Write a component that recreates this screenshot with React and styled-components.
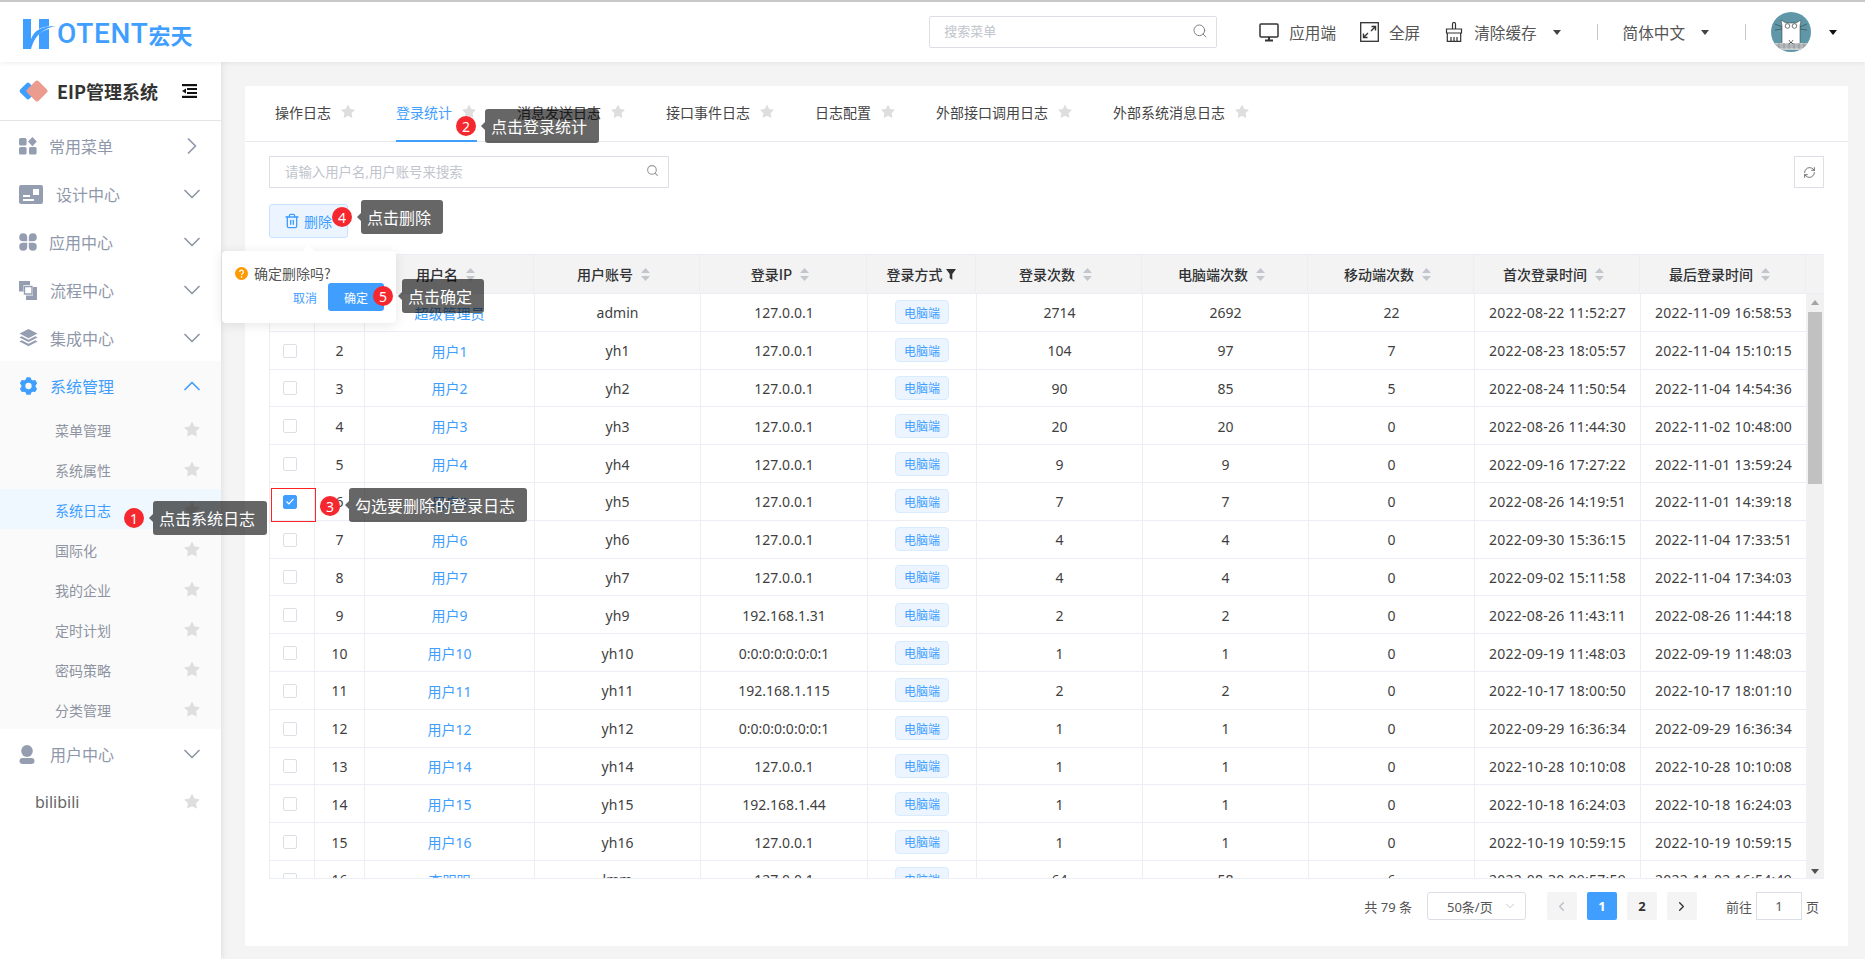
import React from "react";
import styled, { createGlobalStyle } from "styled-components";
import { ChevronDown, ChevronRight, ChevronUp, ChevronLeft, Search, RefreshCw, Trash2 } from "lucide-react";
import { AiFillStar } from "react-icons/ai";

const BLUE = "#409eff";
const MENU = "#8f98aa";
const LINE = "#ebeef5";
const COLS = "45px 50px 170px 166px 167px 109px 166px 166px 166px 166px 166px";

const Global = createGlobalStyle`
  html, body { margin: 0; padding: 0; height: 100%; overflow: hidden; }
  body { font-family: "Noto Sans", "Noto Sans CJK SC", sans-serif; font-size: 14px; color: #333; background: #f4f4f4; }
  * { box-sizing: border-box; }
`;

const Page = styled.div`
  position: relative; width: 100%; height: 959px; display: flex; flex-direction: column; overflow: hidden; background: #f4f4f4;
`;

/* ---------- top bar ---------- */
const TopBar = styled.header`
  height: 62px; flex: none; display: flex; align-items: center; padding: 0 28px 0 23px; background: #fff;
  border-top: 2px solid #c9c9c9; box-shadow: 0 1px 5px rgba(0,0,0,.08); position: relative; z-index: 3;
`;
const Logo = styled.div`display: flex; align-items: flex-end; height: 32px; color: ${BLUE}; margin-top: 1px;`;
const LogoLatin = styled.span`font-family: Roboto, sans-serif; font-weight: 500; font-size: 28px; line-height: 30px; letter-spacing: .7px; margin-left: 1px;`;
const LogoCjk = styled.span`font-family: "Noto Sans CJK SC", sans-serif; font-weight: 700; font-size: 22px; line-height: 30px;`;
const MenuSearch = styled.div`
  margin-left: auto; margin-right: 42px; width: 288px; height: 32px; border: 1px solid #dcdfe6; border-radius: 2px;
  display: flex; align-items: center; justify-content: space-between; padding: 0 8px 3px 14px; font-size: 13px; color: #c0c4cc;
  svg { color: #777; }
`;
const Action = styled.div`
  display: flex; align-items: center; gap: 10px; font-size: 15.6px; color: #555; font-family: "Noto Sans CJK SC", sans-serif;
  & + & { margin-left: 24px; }
  svg { flex: none; color: #333; }
`;
const Caret = styled.i`
  display: block; width: 0; height: 0; margin-left: 6px; border-style: solid; border-width: 5px 4px 0; border-color: ${p => p.$dark ? "#111" : "#444"} transparent transparent;
`;
const VSep = styled.i`display: block; width: 1px; height: 16px; background: #c8c8c8; margin: 0 25px 0 36px;`;
const AvatarWrap = styled.div`display: flex; align-items: center; gap: 18px; i { margin-left: 0; }`;

/* ---------- body ---------- */
const Shell = styled.div`flex: 1; min-height: 0; display: flex;`;
const Sidebar = styled.aside`
  width: 221px; flex: none; background: #fff; box-shadow: 2px 0 6px rgba(0,0,0,.07); position: relative; z-index: 2;
`;
const Brand = styled.div`
  height: 59px; border-bottom: 1px solid #e4e4e4; display: flex; align-items: center; padding: 0 24px 0 18px;
  font-family: "Noto Sans CJK SC", sans-serif; font-weight: 600; font-size: 18px; color: #333; gap: 9px;
  svg:last-child { margin-left: auto; }
`;
const NavItem = styled.div`
  height: 48px; display: flex; align-items: center; padding: 2px 15px 0 19px; gap: 11px; font-size: 16px;
  font-family: "Noto Sans CJK SC", sans-serif; color: ${p => p.$active ? BLUE : MENU};
  background: ${p => p.$active ? "#fafafa" : "transparent"};
  & > svg:last-child { margin-left: auto; }
`;
const IconSlot = styled.span`display: flex; align-items: center; width: ${p => p.$w || 20}px; flex: none; color: ${p => p.$active ? BLUE : "#959eb1"};`;
const SubList = styled.div`background: #fafafa;`;
const SubItem = styled.div`
  height: 40px; display: flex; align-items: center; justify-content: space-between; padding: 2px 20px 0 55px; font-size: 14px;
  font-family: "Noto Sans CJK SC", sans-serif;
  color: ${p => p.$active ? BLUE : "#8d93a0"}; background: ${p => p.$active ? "#eff7ff" : "transparent"};
`;
const LeafItem = styled(NavItem)`padding: 2px 20px 0 35px; color: #666; font-family: "Noto Sans", sans-serif;`;

const Main = styled.main`flex: 1; min-width: 0; padding: 24px 17px 13px 24px;`;
const Card = styled.section`height: 100%; background: #fff; display: flex; flex-direction: column;`;

const Tabs = styled.nav`height: 56px; flex: none; display: flex; padding-left: 10px; border-bottom: 1px solid #e7e9ee;`;
const Tab = styled.div`
  position: relative; height: 55px; padding: 0 20px 3px; display: flex; align-items: center; gap: 9px; font-size: 14px; white-space: nowrap;
  font-family: "Noto Sans CJK SC", sans-serif;
  color: ${p => p.$active ? BLUE : "#444"};
  &::after { content: ""; display: ${p => p.$active ? "block" : "none"}; position: absolute; left: 20px; right: 20px; bottom: -1px; height: 2px; background: ${BLUE}; }
`;
const Star = styled(AiFillStar)`color: #dedede; flex: none;`;

const Content = styled.div`flex: 1; min-height: 0; display: flex; flex-direction: column; padding: 14px 24px 0;`;
const SearchRow = styled.div`display: flex; justify-content: space-between; height: 32px; flex: none;`;
const SearchBox = styled.div`
  width: 400px; border: 1px solid #dcdfe6; display: flex; align-items: center; justify-content: space-between;
  padding: 0 9px 3px 15px; font-size: 13.4px; color: #c0c4cc; svg { color: #999; }
`;
const IconBtn = styled.button`
  width: 30px; padding: 0; background: #fff; border: 1px solid #dcdfe6; display: flex; align-items: center; justify-content: center; color: #555;
`;
const DeleteBtn = styled.button`
  margin-top: 16px; width: 79px; height: 34px; flex: none; display: flex; align-items: center; gap: 4px; padding: 0 0 0 14px; background: #ecf5ff; border: 1px solid #c6e2ff; border-radius: 3px;
  color: ${BLUE}; font: 14px "Noto Sans CJK SC", sans-serif;
`;

const Table = styled.div`margin-top: 16px; height: 625px; flex: none; display: flex; flex-direction: column; border-left: 1px solid ${LINE}; border-top: 1px solid ${LINE}; border-bottom: 1px solid ${LINE}; overflow: hidden;`;
const Head = styled.div`
  height: 39px; flex: none; display: grid; grid-template-columns: ${COLS} 1fr; background: #f3f3f4; border-bottom: 1px solid ${LINE};
  margin-left: -1px;
`;
const HeadCell = styled.div`
  display: flex; align-items: center; justify-content: center; gap: ${p => p.$filter ? 3 : 8}px; padding-right: ${p => p.$filter ? 0 : 6}px; border-right: 1px solid ${LINE};
  font: 500 14px "Noto Sans CJK SC", sans-serif; color: #303133;
  &:last-child { border-right: 0; }
`;
const TableBody = styled.div`flex: 1; min-height: 0; display: flex; margin-left: -1px;`;
const Rows = styled.div`flex: 1; min-width: 0; overflow: hidden;`;
const Row = styled.div`
  height: 37.8px; display: grid; grid-template-columns: ${COLS}; border-bottom: 1px solid ${LINE}; border-left: 1px solid ${LINE};
`;
const Cell = styled.div`
  display: flex; align-items: center; justify-content: center; border-right: 1px solid ${LINE}; font-size: 14px; color: #3f3f3f; white-space: nowrap;
  letter-spacing: ${p => p.$time ? ".25px" : "0"}; padding-top: ${p => p.$plain ? 0 : 1}px;
  font-family: "Noto Sans", "Noto Sans CJK SC", sans-serif;
  &:first-child { margin-left: -1px; }
`;
const UserLink = styled.span`color: ${BLUE}; font-family: "Noto Sans", "Noto Sans CJK SC", sans-serif; line-height: 1; padding-top: 3px;`;
const Tag = styled.span`
  width: 54px; height: 24px; display: flex; align-items: center; justify-content: center; background: #ecf5ff; border: 1px solid #d9ecff; border-radius: 4px;
  color: ${BLUE}; font: 12px "Noto Sans CJK SC", sans-serif;
`;
const Check = styled.span`
  width: 14px; height: 14px; margin: 1px 0 0 -4px; border-radius: 2px; display: flex; align-items: center; justify-content: center;
  border: 1px solid ${p => p.$on ? BLUE : "#dcdfe6"}; background: ${p => p.$on ? BLUE : "#fff"};
`;
const ScrollBar = styled.div`width: 18px; flex: none; background: #f1f1f1; display: flex; flex-direction: column; align-items: center; position: relative;`;
const ArrowUp = styled.i`display: block; margin-top: 6px; width: 0; height: 0; border-style: solid; border-width: 0 4px 5px; border-color: transparent transparent #a3a3a3;`;
const ArrowDown = styled.i`position: absolute; bottom: 4px; width: 0; height: 0; border-style: solid; border-width: 5px 4px 0; border-color: #505050 transparent transparent;`;
const Thumb = styled.div`width: 14px; height: 172px; margin-top: 7px; background: #c1c1c1;`;

const Pager = styled.div`
  margin-top: 13px; height: 28px; flex: none; display: flex; align-items: center; justify-content: flex-end; padding-right: 5px;
  font: 13px "Noto Sans", "Noto Sans CJK SC", sans-serif; color: #555;
`;
const PageSize = styled.div`
  width: 99px; height: 28px; margin: 0 21px 0 15px; border: 1px solid #dcdfe6; border-radius: 3px; display: flex; align-items: center; justify-content: space-between;
  padding: 0 8px 0 19px; color: #555; svg { color: #c0c4cc; }
`;
const PageBtn = styled.div`
  width: 30px; height: 28px; margin-right: 10px; border-radius: 2px; display: flex; align-items: center; justify-content: center; font-weight: 700;
  background: ${p => p.$on ? BLUE : "#f4f4f5"}; color: ${p => p.$on ? "#fff" : p.$muted ? "#b9bcc4" : "#303133"};
`;
const Jump = styled.span`margin-left: 19px;`;
const JumpInput = styled.div`width: 46px; height: 28px; margin: 0 4px; border: 1px solid #dcdfe6; display: flex; align-items: center; justify-content: center; color: #555;`;

/* ---------- overlays ---------- */
const Popover = styled.div`
  position: absolute; left: 222px; top: 251px; width: 174px; height: 72px; background: #fff; border-radius: 4px;
  box-shadow: 0 2px 12px rgba(0,0,0,.1); z-index: 5; padding: 13px 12px 0 13px;
  &::before { content: ""; position: absolute; left: 82px; top: -4px; width: 9px; height: 9px; background: #fff; transform: rotate(45deg); }
`;
const PopText = styled.div`display: flex; align-items: center; gap: 6px; font: 14px "Noto Sans CJK SC", sans-serif; color: #555; height: 18px;`;
const PopActions = styled.div`display: flex; align-items: center; justify-content: flex-end; margin-top: 1px; padding-right: 0;`;
const PopCancel = styled.span`font: 12px "Noto Sans CJK SC", sans-serif; color: ${BLUE}; margin-right: 11px;`;
const PopOk = styled.span`
  width: 56px; height: 28px; background: ${BLUE}; border-radius: 3px; color: #fff; font: 12px "Noto Sans CJK SC", sans-serif;
  display: flex; align-items: center; padding-left: 16px;
`;
const Badge = styled.span`
  position: absolute; left: ${p => p.$x}px; top: ${p => p.$y}px; width: 20px; height: 20px; border-radius: 50%; background: #f5282f; color: #fff; z-index: 7;
  display: flex; align-items: center; justify-content: center; font: 14px "Noto Sans", sans-serif;
`;
const Tip = styled.div`
  position: absolute; left: ${p => p.$x}px; top: ${p => p.$y}px; height: 34px; padding: 0 12px 0 6px; background: rgba(0,0,0,.6); border-radius: 3px; color: #fff; z-index: 7;
  display: flex; align-items: center; font: 16px "Noto Sans CJK SC", sans-serif; white-space: nowrap;
  &::before { content: ""; position: absolute; left: -4px; top: 13px; border-style: solid; border-width: 4px 4px 4px 0; border-color: transparent rgba(0,0,0,.6) transparent transparent; }
`;
const RedFrame = styled.div`position: absolute; left: 271px; top: 488px; width: 45px; height: 34px; border: 1px solid #f22; z-index: 6;`;

/* ---------- drawings ---------- */
const HMark = () => (
  <svg width="33" height="30" viewBox="0 0 33 30" fill="#409eff">
    <path d="M0 0H8V20C11 12 18 7 33 7C24 8.5 16 13 11 22C9.5 25 8.5 28 8 30H0Z" />
    <path d="M16 0H26V7.2C22 7.6 19 8.6 16 10Z" />
    <path d="M26 10V30H16V15C19 12.5 22 11 26 10Z" />
  </svg>
);
const BrandMark = () => (
  <svg width="30" height="24" viewBox="0 0 30 24">
    <rect x="3.5" y="5.5" width="13" height="13" rx="2" transform="rotate(45 10 12)" fill="#409eff" />
    <rect x="11" y="4" width="16" height="16" rx="2" transform="rotate(45 19 12)" fill="#ec9b8f" />
  </svg>
);
const Outdent = () => (
  <svg width="15" height="14" viewBox="0 0 15 14" fill="#111">
    <rect x="0" y="0" width="15" height="2.2" /><rect x="5" y="4" width="10" height="2" /><rect x="5" y="8" width="10" height="2" /><rect x="0" y="11.8" width="15" height="2.2" />
    <path d="M0 7l4-2.6v5.2z" />
  </svg>
);
const IcoQuick = () => (
  <svg width="18" height="18" viewBox="0 0 18 18" fill="currentColor">
    <rect x="0" y="1" width="7.6" height="7.6" rx="1.6" /><path d="M13.4 0l4.4 4.6-4.4 4.6L9 4.6z" /><rect x="0" y="10" width="7.6" height="7.6" rx="1.6" /><rect x="10" y="10" width="7.6" height="7.6" rx="1.6" />
  </svg>
);
const IcoDesign = () => (
  <svg width="24" height="19" viewBox="0 0 24 19" fill="currentColor">
    <path d="M2 0h20a2 2 0 0 1 2 2v15a2 2 0 0 1-2 2H2a2 2 0 0 1-2-2V2a2 2 0 0 1 2-2zm12 4v6h6V4zM4 10v2h7v-2zm0 4v2h11v-2z" fillRule="evenodd" />
  </svg>
);
const IcoApps = () => (
  <svg width="18" height="18" viewBox="0 0 18 18" fill="currentColor">
    <path d="M8.2 8.2H4A4 4 0 1 1 8.2 4zM9.8 8.2H14A4 4 0 1 0 9.8 4zM8.2 9.8H4A4 4 0 1 0 8.2 14zM9.8 9.8H14A4 4 0 1 1 9.8 14z" />
  </svg>
);
const IcoFlow = () => (
  <svg width="18" height="19" viewBox="0 0 18 19" fill="currentColor">
    <path d="M0 0h11v4H4.5v6.5H0z" /><path d="M7 14.5h7V6h4v13H7z" />
    <path d="M5.5 5.5h7.5v7.5H5.5z" fill="none" stroke="currentColor" strokeWidth="1.4" />
  </svg>
);
const IcoLayers = () => (
  <svg width="19" height="19" viewBox="0 0 19 19" fill="currentColor">
    <path d="M9.5 0l9 4.6-9 4.6-9-4.6z" /><path d="M2.6 7.3l6.9 3.5 6.9-3.5 2.1 1.2-9 4.6-9-4.6z" /><path d="M2.6 11.2l6.9 3.5 6.9-3.5 2.1 1.2-9 4.9-9-4.9z" />
  </svg>
);
const IcoGear = () => (
  <svg width="19" height="20" viewBox="0 0 24 24" fill="currentColor">
    <path fillRule="evenodd" d="M10.3 1h3.4c.6 0 1 .3 1.2.8l.6 2 2 1.1 2-.5c.6-.1 1.1.1 1.4.6l1.7 3c.3.5.2 1-.2 1.4L21 11v2.2l1.4 1.5c.4.4.5 1 .2 1.4l-1.7 3c-.3.5-.8.7-1.4.6l-2-.5-2 1.1-.6 2c-.2.5-.6.8-1.2.8h-3.4c-.6 0-1-.3-1.2-.8l-.6-2-2-1.1-2 .5c-.6.1-1.1-.1-1.4-.6l-1.7-3c-.3-.5-.2-1 .2-1.4L3 13.2V11L1.6 9.4c-.4-.4-.5-1-.2-1.4l1.7-3c.3-.5.8-.7 1.4-.6l2 .5 2-1.1.6-2c.2-.5.6-.8 1.2-.8zM12 8a4 4 0 1 0 0 8 4 4 0 0 0 0-8z" />
  </svg>
);
const IcoUser = () => (
  <svg width="16" height="19" viewBox="0 0 16 19" fill="currentColor">
    <ellipse cx="8" cy="6" rx="5.8" ry="6" /><rect x="0.5" y="13" width="15" height="6" rx="3" />
  </svg>
);
const IcoMonitor = () => (
  <svg width="20" height="19" viewBox="0 0 20 19" fill="none" stroke="#333" strokeWidth="1.5">
    <rect x="1" y="1" width="18" height="13" rx="1" /><path d="M10 14v3M6 17.5h8" strokeWidth="2" />
  </svg>
);
const IcoFull = () => (
  <svg width="19" height="20" viewBox="0 0 19 20" fill="none" stroke="#333" strokeWidth="1.3">
    <rect x=".7" y=".7" width="17.6" height="18.6" /><path d="M11 9L15 5M11.5 4.5h4v4M8 11L4 15M3.5 11.5v4h4" strokeWidth="1.4" />
  </svg>
);
const IcoBroom = () => (
  <svg width="20" height="20" viewBox="0 0 20 20" fill="none" stroke="#333" strokeWidth="1.2">
    <path d="M8.5 7V2a1.5 1.5 0 0 1 3 0v5M2.5 7h15v4h-15zM3.3 11v8.3h13.4V11M7 19v-4M10 19v-4M13 19v-4" />
  </svg>
);
const Cat = () => (
  <svg width="40" height="40" viewBox="0 0 40 40">
    <defs><clipPath id="av"><circle cx="20" cy="20" r="20" /></clipPath></defs>
    <g clipPath="url(#av)">
      <rect width="40" height="40" fill="#5f97a9" />
      <path d="M11 33V14l-1-6 5 3h10l5-3-1 6v19z" fill="#fff" stroke="#333" strokeWidth=".5" />
      <circle cx="16.5" cy="14" r="2.3" fill="none" stroke="#555" strokeWidth=".8" /><circle cx="23.5" cy="14" r="2.3" fill="none" stroke="#555" strokeWidth=".8" />
      <path d="M4 12l7 3M4 18l7-1M36 12l-7 3M36 18l-7-1" stroke="#333" strokeWidth=".5" />
      <rect x="3" y="31" width="34" height="7" fill="#c8cdd0" />
      <path d="M3 33h34M3 35h34M8 31v6M13 31v6M18 31v6M23 31v6M28 31v6M33 31v6" stroke="#777" strokeWidth=".5" />
      <path d="M18 28l2 3 2-3M18 32l2-2 2 2" stroke="#333" strokeWidth=".7" fill="none" />
    </g>
  </svg>
);
const Sort = () => (
  <svg width="9" height="13" viewBox="0 0 9 13" fill="#c3c6cc"><path d="M4.5 0L9 5H0zM0 8h9l-4.5 5z" /></svg>
);
const Funnel = () => (
  <svg width="10" height="11" viewBox="0 0 10 11" fill="#303133"><path d="M0 0h10L6.3 5v6L3.7 9V5z" /></svg>
);
const Help = () => (
  <svg width="13" height="13" viewBox="0 0 13 13"><circle cx="6.5" cy="6.5" r="6.5" fill="#f90" />
    <path d="M4.6 5a1.9 1.9 0 1 1 2.8 1.7c-.6.3-.9.6-.9 1.3" fill="none" stroke="#fff" strokeWidth="1.2" /><circle cx="6.5" cy="9.9" r=".8" fill="#fff" /></svg>
);
const Tick = () => (
  <svg width="10" height="9" viewBox="0 0 10 9" fill="none" stroke="#fff" strokeWidth="1.2"><path d="M1.5 4.5l2.4 2.4L8.5 1.8" /></svg>
);

/* ---------- data ---------- */
const LOCAL = "127.0.0.1";
const V6 = "0:0:0:0:0:0:0:1";
const rows = [
  ["超级管理员", "admin", LOCAL, 2714, 2692, 22, "2022-08-22 11:52:27", "2022-11-09 16:58:53"],
  ["用户1", "yh1", LOCAL, 104, 97, 7, "2022-08-23 18:05:57", "2022-11-04 15:10:15"],
  ["用户2", "yh2", LOCAL, 90, 85, 5, "2022-08-24 11:50:54", "2022-11-04 14:54:36"],
  ["用户3", "yh3", LOCAL, 20, 20, 0, "2022-08-26 11:44:30", "2022-11-02 10:48:00"],
  ["用户4", "yh4", LOCAL, 9, 9, 0, "2022-09-16 17:27:22", "2022-11-01 13:59:24"],
  ["用户5", "yh5", LOCAL, 7, 7, 0, "2022-08-26 14:19:51", "2022-11-01 14:39:18"],
  ["用户6", "yh6", LOCAL, 4, 4, 0, "2022-09-30 15:36:15", "2022-11-04 17:33:51"],
  ["用户7", "yh7", LOCAL, 4, 4, 0, "2022-09-02 15:11:58", "2022-11-04 17:34:03"],
  ["用户9", "yh9", "192.168.1.31", 2, 2, 0, "2022-08-26 11:43:11", "2022-08-26 11:44:18"],
  ["用户10", "yh10", V6, 1, 1, 0, "2022-09-19 11:48:03", "2022-09-19 11:48:03"],
  ["用户11", "yh11", "192.168.1.115", 2, 2, 0, "2022-10-17 18:00:50", "2022-10-17 18:01:10"],
  ["用户12", "yh12", V6, 1, 1, 0, "2022-09-29 16:36:34", "2022-09-29 16:36:34"],
  ["用户14", "yh14", LOCAL, 1, 1, 0, "2022-10-28 10:10:08", "2022-10-28 10:10:08"],
  ["用户15", "yh15", "192.168.1.44", 1, 1, 0, "2022-10-18 16:24:03", "2022-10-18 16:24:03"],
  ["用户16", "yh16", LOCAL, 1, 1, 0, "2022-10-19 10:59:15", "2022-10-19 10:59:15"],
  ["李明明", "lmm", LOCAL, 64, 58, 6, "2022-08-30 09:57:59", "2022-11-02 16:54:49"],
];
const nav = [
  ["常用菜单", <IcoQuick />, 19, <ChevronRight size={28} strokeWidth={1.5} />],
  ["设计中心", <IcoDesign />, 26],
  ["应用中心", <IcoApps />, 19],
  ["流程中心", <IcoFlow />, 20],
  ["集成中心", <IcoLayers />, 20],
];
const subs = ["菜单管理", "系统属性", "系统日志", "国际化", "我的企业", "定时计划", "密码策略", "分类管理"];
const tabs = ["操作日志", "登录统计", "消息发送日志", "接口事件日志", "日志配置", "外部接口调用日志", "外部系统消息日志"];
const heads = ["用户名", "用户账号", "登录IP", "登录方式", "登录次数", "电脑端次数", "移动端次数", "首次登录时间", "最后登录时间"];
const notes = [
  { n: 1, text: "点击系统日志", bx: 124, by: 508, tx: 153, ty: 501 },
  { n: 2, text: "点击登录统计", bx: 456, by: 116, tx: 485, ty: 109 },
  { n: 3, text: "勾选要删除的登录日志", bx: 320, by: 496, tx: 349, ty: 488 },
  { n: 4, text: "点击删除", bx: 332, by: 207, tx: 361, ty: 200 },
  { n: 5, text: "点击确定", bx: 373, by: 286, tx: 402, ty: 279 },
];

export default function App() {
  return (
    <Page>
      <Global />
      <TopBar>
        <Logo><HMark /><LogoLatin>OTENT</LogoLatin><LogoCjk>宏天</LogoCjk></Logo>
        <MenuSearch>搜索菜单<Search size={16} strokeWidth={1.4} /></MenuSearch>
        <Action><IcoMonitor />应用端</Action>
        <Action><IcoFull />全屏</Action>
        <Action><IcoBroom />清除缓存<Caret /></Action>
        <VSep />
        <Action>简体中文<Caret /></Action>
        <VSep />
        <AvatarWrap><Cat /><Caret $dark /></AvatarWrap>
      </TopBar>
      <Shell>
        <Sidebar>
          <Brand><BrandMark />EIP管理系统<Outdent /></Brand>
          {nav.map(([label, icon, w, chev]) => (
            <NavItem key={label}>
              <IconSlot $w={w}>{icon}</IconSlot>{label}
              {chev || <ChevronDown size={28} strokeWidth={1.5} />}
            </NavItem>
          ))}
          <NavItem $active>
            <IconSlot $w={20} $active><IcoGear /></IconSlot>系统管理
            <ChevronUp size={28} strokeWidth={1.5} />
          </NavItem>
          <SubList>
            {subs.map(s => (
              <SubItem key={s} $active={s === "系统日志"}>{s}<Star size={18} /></SubItem>
            ))}
          </SubList>
          <NavItem>
            <IconSlot $w={20}><IcoUser /></IconSlot>用户中心
            <ChevronDown size={28} strokeWidth={1.5} />
          </NavItem>
          <LeafItem>bilibili<Star size={18} /></LeafItem>
        </Sidebar>
        <Main>
          <Card>
            <Tabs>
              {tabs.map(t => (
                <Tab key={t} $active={t === "登录统计"}>{t}<Star size={16} /></Tab>
              ))}
            </Tabs>
            <Content>
              <SearchRow>
                <SearchBox>请输入用户名,用户账号来搜索<Search size={13} /></SearchBox>
                <IconBtn><RefreshCw size={13} strokeWidth={1.5} /></IconBtn>
              </SearchRow>
              <DeleteBtn><Trash2 size={16} strokeWidth={2} />删除</DeleteBtn>
              <Table>
                <Head>
                  <HeadCell />
                  <HeadCell />
                  {heads.map(h => (
                    <HeadCell key={h} $filter={h === "登录方式"}>{h === "登录方式" ? <>{h}<Funnel /></> : <>{h}<Sort /></>}</HeadCell>
                  ))}
                  <HeadCell />
                </Head>
                <TableBody>
                  <Rows>
                    {rows.map((r, i) => (
                      <Row key={r[1]}>
                        <Cell $plain><Check $on={i === 5}>{i === 5 && <Tick />}</Check></Cell>
                        <Cell>{i + 1}</Cell>
                        <Cell $plain><UserLink>{r[0]}</UserLink></Cell>
                        <Cell>{r[1]}</Cell>
                        <Cell>{r[2]}</Cell>
                        <Cell $plain><Tag>电脑端</Tag></Cell>
                        <Cell>{r[3]}</Cell>
                        <Cell>{r[4]}</Cell>
                        <Cell>{r[5]}</Cell>
                        <Cell $time>{r[6]}</Cell>
                        <Cell $time>{r[7]}</Cell>
                      </Row>
                    ))}
                  </Rows>
                  <ScrollBar><ArrowUp /><Thumb /><ArrowDown /></ScrollBar>
                </TableBody>
              </Table>
              <Pager>
                共 79 条
                <PageSize>50条/页<ChevronDown size={14} strokeWidth={1.5} /></PageSize>
                <PageBtn $muted><ChevronLeft size={15} strokeWidth={2} /></PageBtn>
                <PageBtn $on>1</PageBtn>
                <PageBtn>2</PageBtn>
                <PageBtn><ChevronRight size={15} strokeWidth={2} /></PageBtn>
                <Jump>前往</Jump>
                <JumpInput>1</JumpInput>
                页
              </Pager>
            </Content>
          </Card>
        </Main>
      </Shell>

      <Popover>
        <PopText><Help />确定删除吗?</PopText>
        <PopActions><PopCancel>取消</PopCancel><PopOk>确定</PopOk></PopActions>
      </Popover>
      <RedFrame />
      {notes.map(a => (
        <React.Fragment key={a.n}>
          <Badge $x={a.bx} $y={a.by}>{a.n}</Badge>
          <Tip $x={a.tx} $y={a.ty}>{a.text}</Tip>
        </React.Fragment>
      ))}
    </Page>
  );
}
